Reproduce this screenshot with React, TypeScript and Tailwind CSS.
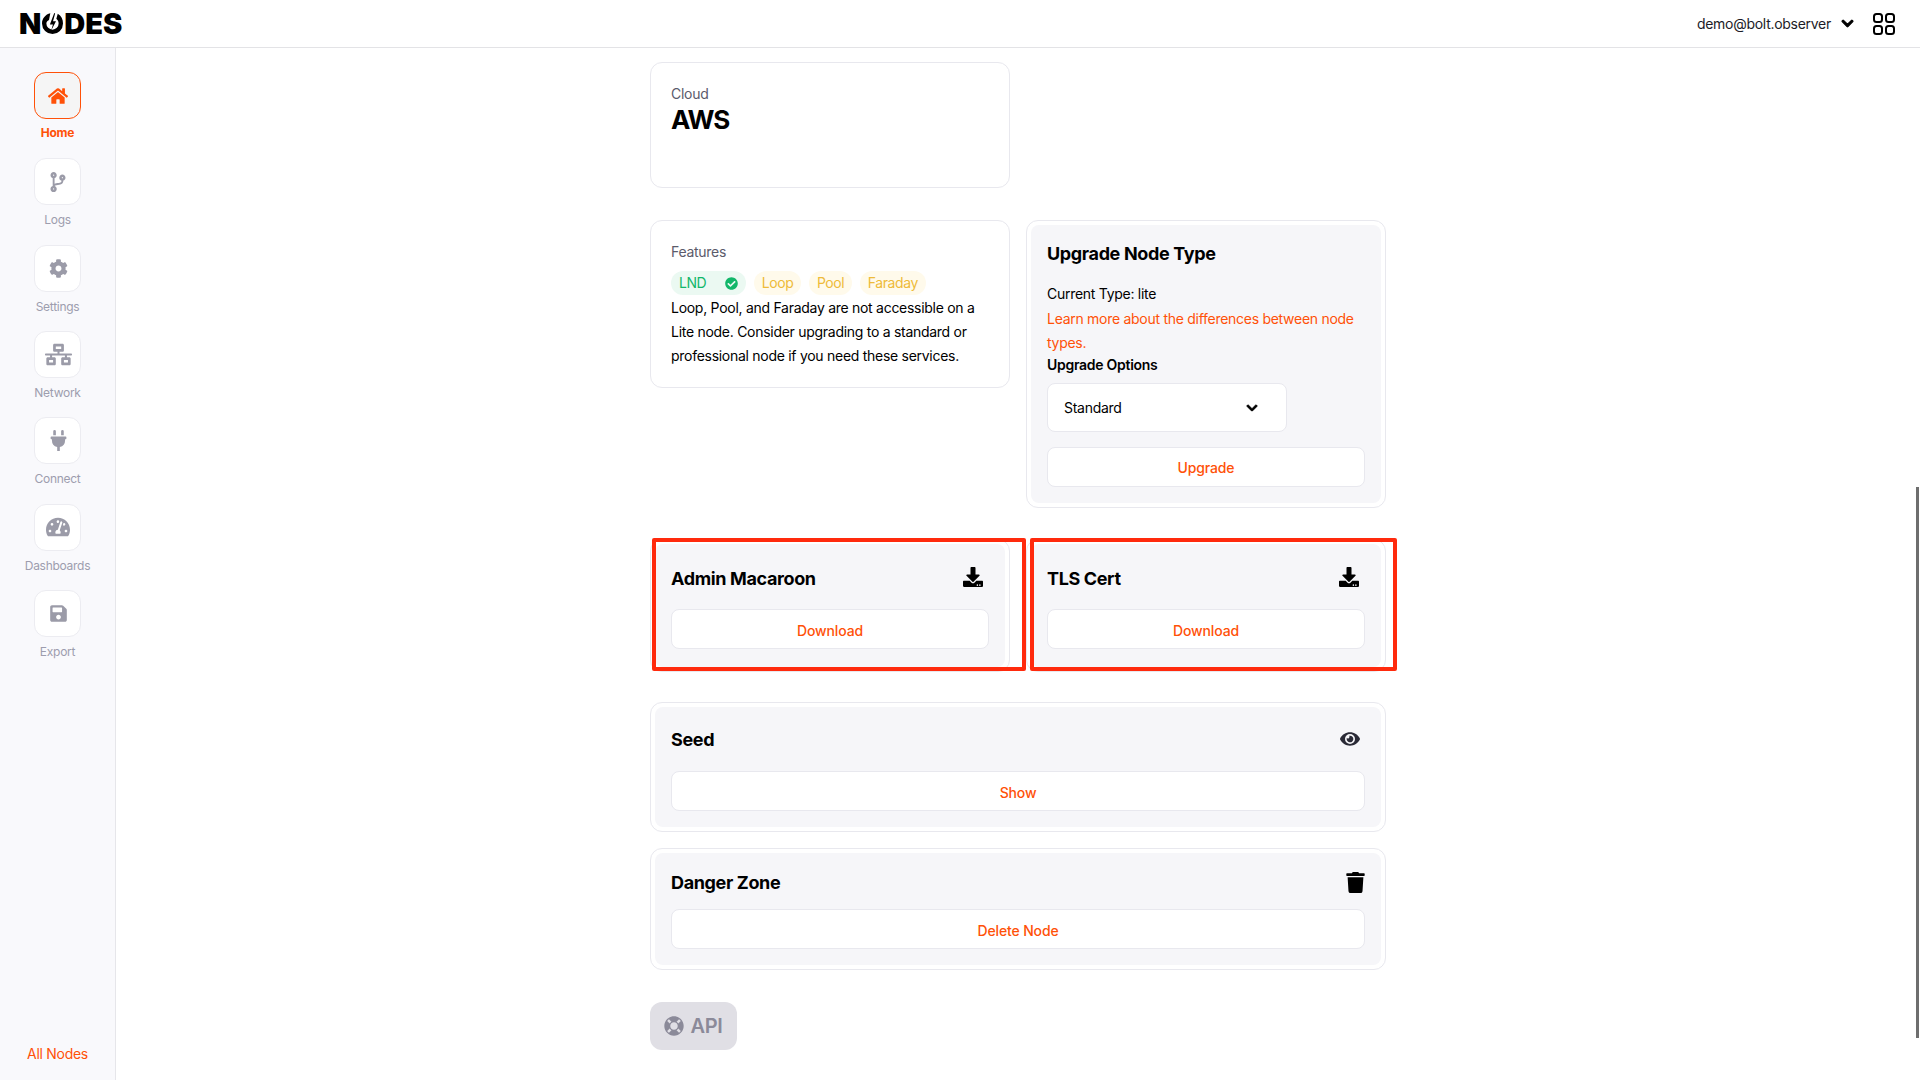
import type { ReactNode } from "react";
import {
  FaHome,
  FaCodeBranch,
  FaCog,
  FaNetworkWired,
  FaPlug,
  FaTachometerAlt,
  FaSave,
  FaChevronDown,
  FaCheckCircle,
  FaEye,
  FaTrash,
  FaLifeRing,
  FaDownload,
} from "react-icons/fa";

const navItems = [
  { label: "Home", icon: FaHome, size: "h-5 w-5", active: true },
  { label: "Logs", icon: FaCodeBranch, size: "h-5 w-5" },
  { label: "Settings", icon: FaCog, size: "h-[19px] w-[19px]" },
  { label: "Network", icon: FaNetworkWired, size: "h-[27px] w-[27px]" },
  { label: "Connect", icon: FaPlug, size: "h-[21px] w-[21px]" },
  { label: "Dashboards", icon: FaTachometerAlt, size: "h-6 w-6" },
  { label: "Export", icon: FaSave, size: "h-[19px] w-[19px]" },
];

const ActionButton = ({ children, className = "pt-[4px]" }: { children: ReactNode; className?: string }) => (
  <button
    className={`h-10 w-full rounded-lg border border-[#e8e8ee] bg-white text-sm font-medium tracking-[-0.01em] text-[#ff5108] ${className}`}
  >
    {children}
  </button>
);

const Panel = ({
  title,
  icon,
  button,
  className,
  titleClass,
  marker,
}: {
  title: string;
  icon: ReactNode;
  button: string;
  className: string;
  titleClass: string;
  marker?: ReactNode;
}) => (
  <div className="relative rounded-xl border border-[#e8e8ee] p-1">
    {marker}
    <div className={`rounded-lg bg-[#f6f6f9] px-4 ${className}`}>
      <div className={`flex h-7 items-center justify-between ${titleClass}`}>
        <h3 className="text-lg font-bold tracking-[-0.02em] text-black">{title}</h3>
        {icon}
      </div>
      <ActionButton>{button}</ActionButton>
    </div>
  </div>
);

const Badge = ({ children, green }: { children: ReactNode; green?: boolean }) => (
  <span
    className={`flex h-6 items-center rounded-full px-2 text-sm tracking-[-0.03em] ${
      green ? "gap-[19px] bg-[#ebf9f2] text-[#12b76a]" : "bg-[#fffaeb] text-[#eebb3a]"
    }`}
  >
    {children}
  </span>
);

const Logo = () => (
  <div className="flex items-center text-[29px] leading-none font-black tracking-normal text-black">
    <span>N</span>
    <svg viewBox="0 0 24 24" className="mx-[1px] h-[21px] w-[21px]">
      <path
        fill="currentColor"
        d="M9.5 0.4 L8 8 C6 9 5 10.4 5 12 a7 7 0 0 0 14 0 c0-2.2-1-4-2.6-5.3 L18 0.9 C22 3 24 7.2 24 12 a12 12 0 0 1-24 0 C0 6.4 4 1.6 9.5 0.4 Z"
      />
      <path fill="currentColor" d="M14 0 L9 13 h3.5 L10.5 20 L16 9.5 h-3.4 L15 0.6 Z" />
    </svg>
    <span>DES</span>
  </div>
);

export default function App() {
  return (
    <div className="relative flex h-screen flex-col overflow-hidden bg-white font-['Inter',sans-serif] text-sm tracking-[-0.02em] text-black">
      <header className="flex h-12 shrink-0 items-center justify-between border-b border-[#e3e3e6] pr-[25px] pl-[19px]">
        <Logo />
        <div className="flex items-center">
          <span className="pt-px text-sm text-[#1c1c28]">demo@bolt.observer</span>
          <FaChevronDown className="mr-[19px] ml-[10px] h-[13px] w-[13px]" stroke="currentColor" strokeWidth={40} />
          <svg viewBox="0 0 22 22" className="h-[22px] w-[22px]" fill="none" stroke="black" strokeWidth="2">
            <rect x="1" y="1" width="8" height="8" rx="2.5" />
            <rect x="13" y="1" width="8" height="8" rx="2.5" />
            <rect x="1" y="13" width="8" height="8" rx="2.5" />
            <rect x="13" y="13" width="8" height="8" rx="2.5" />
          </svg>
        </div>
      </header>

      <div className="flex min-h-0 flex-1">
        <aside className="flex w-[116px] shrink-0 flex-col items-center border-r border-[#e6e6ea] bg-[#f9f9fc] pt-6">
          <nav className="flex flex-col items-center gap-[16.33px]">
            {navItems.map(({ label, icon: Icon, size, active }) => (
              <div key={label} className="flex flex-col items-center">
                <div
                  className={`flex h-[47px] w-[47px] items-center justify-center rounded-xl border pl-px ${
                    active ? "border-[#ff5108] bg-[#f5f5f5] text-[#ff5108]" : "border-[#ececf1] bg-white text-[#9b9ba8]"
                  }`}
                >
                  <Icon className={size} />
                </div>
                <span
                  className={`text-xs leading-4 ${active ? "mt-1.5 mb-px font-bold text-[#ff5108]" : "mt-[7px] text-[#9d9dae]"}`}
                >
                  {label}
                </span>
              </div>
            ))}
          </nav>
          <a className="mt-auto mb-[16px] text-sm text-[#ff5108]">All Nodes</a>
        </aside>

        <main className="min-w-0 flex-1 overflow-hidden pt-[14px]">
          <div className="mx-auto w-[736px]">
            <div className="h-[126px] w-[360px] rounded-xl border border-[#e8e8ee] px-5 pt-[21px]">
              <p className="text-sm leading-5 text-[#5b5b6b]">Cloud</p>
              <p className="text-[26px] leading-8 font-bold tracking-[-0.04em]">AWS</p>
            </div>

            <div className="mt-8 grid grid-cols-[360px_360px] items-start gap-x-4">
              <div className="h-[168px] rounded-xl border border-[#e8e8ee] px-5 pt-[21px]">
                <p className="text-sm leading-5 text-[#5b5b6b]">Features</p>
                <div className="mt-[9px] flex gap-[7.5px]">
                  <Badge green>
                    LND
                    <FaCheckCircle className="h-[13px] w-[13px] text-[#12b76a]" />
                  </Badge>
                  <Badge>Loop</Badge>
                  <Badge>Pool</Badge>
                  <Badge>Faraday</Badge>
                </div>
                <p className="mt-px leading-6">
                  Loop, Pool, and Faraday are not accessible on a Lite node. Consider upgrading to a standard or
                  professional node if you need these services.
                </p>
              </div>

              <div className="h-[288px] rounded-xl border border-[#e8e8ee] p-1">
                <div className="h-full rounded-lg bg-[#f6f6f9] px-4 pt-[15px]">
                  <h3 className="text-lg leading-7 font-bold tracking-[-0.02em]">Upgrade Node Type</h3>
                  <p className="mt-[14px] leading-6">Current Type: lite</p>
                  <p className="mt-px leading-6 text-[#ff5108]">Learn more about the differences between node types.</p>
                  <p className="leading-[20px] font-semibold">Upgrade Options</p>
                  <div className="mt-2 flex h-[49px] w-[240px] items-center justify-between rounded-lg border border-[#e8e8ee] bg-white pr-[28px] pl-4">
                    <span>Standard</span>
                    <FaChevronDown className="h-3 w-3" stroke="currentColor" strokeWidth={40} />
                  </div>
                  <div className="mt-[15px]">
                    <ActionButton className="pt-[2px]">Upgrade</ActionButton>
                  </div>
                </div>
              </div>
            </div>

            <div className="mt-[31px] grid grid-cols-[360px_360px] gap-x-4">
              <Panel
                title="Admin Macaroon"
                button="Download"
                className="pt-[21px] pb-[18px]"
                titleClass="mb-[16px]"
                icon={<FaDownload className="mr-[6px] mb-[4px] h-5 w-5 text-black" />}
                marker={
                  <div className="absolute top-[-2px] left-[1px] z-10 h-[133px] w-[374px] rounded-[2px] border-[4px] border-[#ff2a0d]" />
                }
              />
              <Panel
                title="TLS Cert"
                button="Download"
                className="pt-[21px] pb-[18px]"
                titleClass="mb-[16px]"
                icon={<FaDownload className="mr-[6px] mb-[4px] h-5 w-5 text-black" />}
                marker={
                  <div className="absolute top-[-2px] left-[3px] z-10 h-[133px] w-[367px] rounded-[2px] border-[4px] border-[#ff2a0d]" />
                }
              />
            </div>

            <div className="mt-[30px]">
              <Panel
                title="Seed"
                button="Show"
                className="pt-[19px] pb-4"
                titleClass="mb-[17px]"
                icon={<FaEye className="mr-[5px] mb-[2px] h-5 w-5 text-[#2a2a36]" />}
              />
            </div>

            <div className="mt-4">
              <Panel
                title="Danger Zone"
                button="Delete Node"
                className="pt-4 pb-4"
                titleClass="mb-3"
                icon={<FaTrash className="mb-[2px] h-[21px] w-[19px] text-black" />}
              />
            </div>

            <button className="mt-[32px] flex h-12 w-[87px] items-center justify-center gap-[6px] rounded-xl bg-[#e0dfe5] text-xl font-semibold text-[#8b8a99]">
              <FaLifeRing className="h-5 w-5" />
              API
            </button>
          </div>
        </main>
      </div>

      <div className="absolute top-[487px] right-px h-[551px] w-[3px] bg-[#6e6e6e]" />
    </div>
  );
}
